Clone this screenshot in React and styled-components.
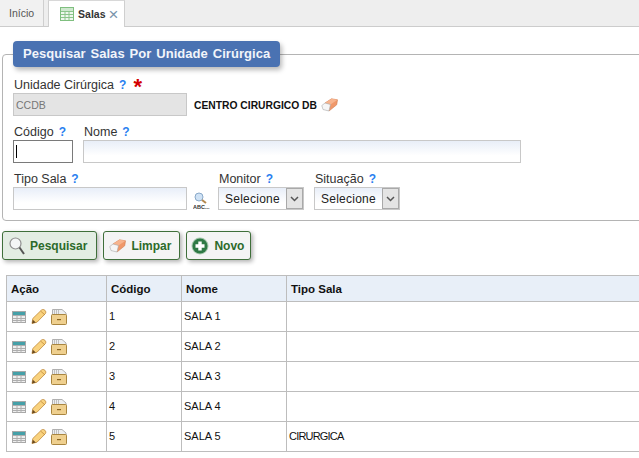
import React from 'react'
import styled, { createGlobalStyle } from 'styled-components'

const Global = createGlobalStyle`
  html, body { margin: 0; padding: 0; background: #fff; overflow: hidden; }
  body { font-family: "Liberation Sans", Arial, sans-serif; width: 639px; height: 458px; }
  * { box-sizing: border-box; }
`

const TabBar = styled.div`
  display: flex;
  height: 27px;
  background: #eeeeee;
  border-bottom: 1px solid #cccccc;
`
const Tab = styled.div`
  display: flex;
  align-items: center;
  height: ${p => (p.$active ? '27px' : '26px')};
  padding: ${p => (p.$active ? '0 5px 0 11px' : '0 9px 0 9px')};
  margin-right: ${p => (p.$active ? '0' : '4px')};
  background: ${p => (p.$active ? '#fff' : '#f1f1f1')};
  border-right: 1px solid #cfcfcf;
  border-left: ${p => (p.$active ? '1px solid #cfcfcf' : 'none')};
  border-top: ${p => (p.$active ? '1px solid #d8d8d8' : 'none')};
  color: ${p => (p.$active ? '#333' : '#555')};
  font-size: 10.5px;
  font-weight: ${p => (p.$active ? 'bold' : 'normal')};
  gap: 4px;
`
const Close = styled.span`
  margin-left: -1px;
  color: #7a93ab;
  font-size: 17px;
  font-weight: normal;
  line-height: 1;
`
const Panel = styled.fieldset`
  margin: 14px 0 0 2px;
  padding: 0 0 10px 10px;
  min-width: 0;
  width: 660px;
  height: 180px;
  border: 1px solid #b4b4b4;
  border-radius: 4px;
`
const Legend = styled.legend`
  margin: 0 0 8px 0;
  padding: 0 10px;
  height: 26px;
  line-height: 26px;
  background: #4a72b2;
  border-radius: 4px;
  color: #f2f5fa;
  font-size: 13px;
  font-weight: bold;
  letter-spacing: 0.05px;
  word-spacing: 1.2px;
  box-shadow: 2px 3px 5px rgba(0, 0, 0, 0.28);
`
const FormRow = styled.div`
  display: flex;
  align-items: flex-end;
  gap: 10px;
  margin-top: ${p => p.$top || 0}px;
`
const Field = styled.div`
  display: flex;
  flex-direction: column;
  gap: 2px;
`
const Label = styled.label`
  display: flex;
  align-items: center;
  gap: 5px;
  height: 13px;
  padding-left: 1px;
  color: #333;
  font-size: 12.5px;
`
const Help = styled.span`
  color: #2a7ff0;
  font-size: 12px;
  font-weight: bold;
`
const Required = styled.span`
  margin-left: 2px;
  color: #d40000;
  font-size: 22px;
  font-weight: bold;
  line-height: 14px;
  height: 10px;
`
const Input = styled.div`
  display: flex;
  align-items: center;
  width: ${p => p.$w}px;
  height: 23px;
  padding-left: 2px;
  border: 1px solid ${p => (p.$focus ? '#7a7a7a' : '#c8c8c8')};
  background: ${p => (p.$disabled
    ? '#e4e4e4'
    : p.$focus ? '#fff' : 'linear-gradient(#e8eef8, #fff 70%)')};
  color: #777;
  font-size: 10.5px;
`
const Caret = styled.span`
  width: 1px;
  height: 13px;
  background: #000;
`
const Description = styled.span`
  display: flex;
  align-items: center;
  gap: 4px;
  margin: 0 0 4px -3px;
  color: #111;
  font-size: 10.3px;
  font-weight: bold;
`
const Lookup = styled.span`
  display: flex;
  margin: 0 -2px 0 -4px;
`
const Select = styled.div`
  display: flex;
  align-items: center;
  justify-content: space-between;
  width: 86px;
  height: 23px;
  padding-left: 6px;
  border: 1px solid #c8c8c8;
  background: linear-gradient(#e8eef8, #fff 70%);
  color: #222;
  font-size: 12px;
  letter-spacing: 0.25px;
`
const SelectArrow = styled.span`
  display: flex;
  align-items: center;
  justify-content: center;
  width: 17px;
  height: 21px;
  background: #e4e4e4;
  border: 1px solid #a9a9a9;
`
const Buttons = styled.div`
  display: flex;
  gap: 6px;
  margin: 10px 0 0 2px;
`
const Button = styled.div`
  display: flex;
  align-items: center;
  gap: 5px;
  height: 29px;
  padding: 0 ${p => p.$right}px 0 ${p => p.$left}px;
  border: 1px solid #3f6f3a;
  border-radius: 3px;
  background: ${p => (p.$active ? '#e3ede3' : '#f4f4f4')};
  color: #2c6a2a;
  font-size: 12px;
  font-weight: bold;
  box-shadow: 2px 2px 4px rgba(0, 0, 0, 0.3);
`
const Table = styled.table`
  margin: 15px 0 0 6px;
  width: 660px;
  border-collapse: collapse;
  table-layout: fixed;
  font-size: 11px;
  color: #111;
`
const Th = styled.th`
  height: 26px;
  padding: 0 4px;
  text-align: left;
  background: #e8eff8;
  border: 1px solid #bdbdbd;
  font-size: 11.5px;
  width: ${p => (p.$w ? p.$w + 'px' : 'auto')};
`
const Td = styled.td`
  height: 30px;
  padding: 0 2px 2px;
  border: 1px solid #bdbdbd;
`
const TypeCell = styled(Td)`
  letter-spacing: -0.8px;
`
const Actions = styled.div`
  display: flex;
  align-items: center;
  gap: 4px;
  padding: 2px 0 0 3px;
`

const HelpMark = () => <Help>?</Help>

const GridIcon = ({ green }) => (
  <svg width={green ? 14 : 15} height={green ? 14 : 12} viewBox={green ? '0 0 14 14' : '0 0 15 12'}>
    {green ? (
      <>
        <rect x="0.5" y="0.5" width="13" height="13" fill="#eef7ee" stroke="#7fbf7f" />
        <rect x="1" y="1" width="12" height="3" fill="#cfe8cf" />
        <path d="M1 4.500h12M1 7.500h12M1 10.500h12M5 4v9M9 4v9" stroke="#8cc58c" />
      </>
    ) : (
      <>
        <rect x="0.5" y="0.5" width="13" height="11" fill="#efefef" stroke="#a8a8a8" />
        <rect x="1" y="1" width="12" height="3" fill="#45a0a8" />
        <path d="M1 4.500h12M1 7.500h12M1 9.500h12M5 4v8M9 4v8" stroke="#aeaeae" />
      </>
    )}
  </svg>
)
const PencilIcon = () => (
  <svg width="16" height="15" viewBox="0 0 16 15">
    <path d="M1 14.500l.8-5L10.500 1c1-.9 2.400-.7 3.400.3s1.300 2.400.4 3.400L6 13.200z" fill="#f9d27e" stroke="#c08a3a" strokeWidth="0.800" />
    <path d="M1 14.500l.8-3.800 3 2.800z" fill="#6a4a20" />
    <path d="M9.500 2l4.500 4" stroke="#c08a3a" strokeWidth="0.800" />
  </svg>
)
const FolderIcon = () => (
  <svg width="16" height="16" viewBox="0 0 16 16">
    <path d="M1.500 7V.5h9.500l4 3.500v3z" fill="#eceef0" stroke="#b0b0b0" />
    <path d="M3.500 1v5M5.500 1v5M7.500 1v5" stroke="#c0c0c0" />
    <rect x="0.500" y="5.500" width="15" height="10" rx="1" fill="#efd08f" stroke="#a9853f" />
    <rect x="6" y="10" width="4" height="1.200" fill="#8a6420" />
  </svg>
)
const EraserIcon = () => (
  <svg width="17" height="14" viewBox="0 0 17 14">
    <path d="M4 5L10.500.8l6 1-.8 5L8 13z" fill="#f0986a" stroke="#d07a4e" strokeWidth="0.600" />
    <path d="M10.500.8l6 1L9.500 6.500 4 5z" fill="#f7b48e" />
    <path d="M.8 7.500L4 5l5.500 1.500L8 13l-6-1.500z" fill="#f6f6f6" stroke="#a8a8a8" strokeWidth="0.600" />
  </svg>
)
const LensAbcIcon = () => (
  <svg width="17" height="18" viewBox="0 0 17 18">
    <circle cx="6" cy="5" r="4" fill="#cfe2f5" stroke="#8aa9c9" />
    <path d="M9 8l4 3" stroke="#b58a50" strokeWidth="2" />
    <text x="0" y="17" fontSize="5.500" fontWeight="bold" fontFamily="Liberation Sans" fill="#333">ABC...</text>
  </svg>
)
const SearchIcon = () => (
  <svg width="16" height="18" viewBox="0 0 16 18">
    <circle cx="6.500" cy="6.500" r="5.500" fill="#f4f6f6" stroke="#909090" strokeWidth="1.200" />
    <path d="M10.500 10.500l4.500 6.500" stroke="#555" strokeWidth="2" />
  </svg>
)
const PlusIcon = () => (
  <svg width="18" height="18" viewBox="0 0 18 18">
    <circle cx="9" cy="9" r="8.500" fill="#a8c8ae" />
    <circle cx="9" cy="9" r="7.500" fill="#2f7a45" />
    <path d="M9 4.500v9M4.500 9h9" stroke="#fff" strokeWidth="3.400" />
  </svg>
)
const ArrowIcon = () => (
  <svg width="9" height="6" viewBox="0 0 9 6">
    <path d="M1 1l3.500 3.500L8 1" fill="none" stroke="#555" strokeWidth="1.500" />
  </svg>
)

const rows = [
  ['1', 'SALA 1', ''],
  ['2', 'SALA 2', ''],
  ['3', 'SALA 3', ''],
  ['4', 'SALA 4', ''],
  ['5', 'SALA 5', 'CIRURGICA'],
]

export default function App() {
  return (
    <>
      <Global />
      <TabBar>
        <Tab>Início</Tab>
        <Tab $active>
          <GridIcon green />
          Salas
          <Close>×</Close>
        </Tab>
      </TabBar>
      <Panel>
        <Legend>Pesquisar Salas Por Unidade Cirúrgica</Legend>
        <FormRow $top={3}>
          <Field>
            <Label>Unidade Cirúrgica <HelpMark /><Required>*</Required></Label>
            <Input $w={174} $disabled>CCDB</Input>
          </Field>
          <Description>CENTRO CIRURGICO DB <EraserIcon /></Description>
        </FormRow>
        <FormRow $top={9}>
          <Field>
            <Label>Código <HelpMark /></Label>
            <Input $w={60} $focus><Caret /></Input>
          </Field>
          <Field>
            <Label>Nome <HelpMark /></Label>
            <Input $w={438} />
          </Field>
        </FormRow>
        <FormRow $top={9}>
          <Field>
            <Label>Tipo Sala <HelpMark /></Label>
            <Input $w={174} />
          </Field>
          <Lookup><LensAbcIcon /></Lookup>
          <Field>
            <Label>Monitor <HelpMark /></Label>
            <Select>Selecione<SelectArrow><ArrowIcon /></SelectArrow></Select>
          </Field>
          <Field>
            <Label>Situação <HelpMark /></Label>
            <Select>Selecione<SelectArrow><ArrowIcon /></SelectArrow></Select>
          </Field>
        </FormRow>
      </Panel>
      <Buttons>
        <Button $active $left={6} $right={9}><SearchIcon />Pesquisar</Button>
        <Button $left={5} $right={8}><EraserIcon />Limpar</Button>
        <Button $left={4} $right={6}><PlusIcon />Novo</Button>
      </Buttons>
      <Table>
        <thead>
          <tr>
            <Th $w={100}>Ação</Th>
            <Th $w={75}>Código</Th>
            <Th $w={105}>Nome</Th>
            <Th>Tipo Sala</Th>
          </tr>
        </thead>
        <tbody>
          {rows.map(r => (
            <tr key={r[0]}>
              <Td>
                <Actions>
                  <GridIcon />
                  <PencilIcon />
                  <FolderIcon />
                </Actions>
              </Td>
              <Td>{r[0]}</Td>
              <Td>{r[1]}</Td>
              <TypeCell>{r[2]}</TypeCell>
            </tr>
          ))}
        </tbody>
      </Table>
    </>
  )
}
